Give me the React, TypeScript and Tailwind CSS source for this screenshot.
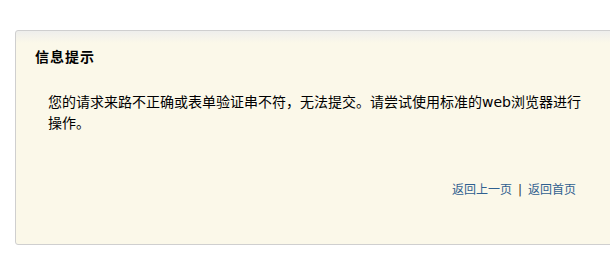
import React from 'react'

export default function App() {
  return (
    <div className="h-[280px] w-[610px] overflow-hidden bg-white pl-[15px] pt-[30px] [font-family:'DejaVu_Sans','Noto_Sans_CJK_SC',sans-serif]">
      <div className="h-[215px] w-[600px] rounded-[3px] border border-[#cfcfcf] bg-[linear-gradient(to_bottom,#eeeeec_0px,#fbf8e9_12px)]">
        <h1 className="pl-[19px] pt-[16px] text-[14px] font-bold leading-[20px] tracking-[1px] text-black">信息提示</h1>
        <p className="ml-[32px] mt-[25px] w-[540px] text-[14px] leading-[21px] text-black">
          您的请求来路不正确或表单验证串不符，无法提交。请尝试使用标准的web浏览器进行操作。
        </p>
        <div className="mt-[47px] flex justify-end pr-[38px] text-[12px] leading-[18px]">
          <a href="#" className="text-[#2f6090]">返回上一页</a>
          <span className="mx-[6px] text-[#333]">|</span>
          <a href="#" className="text-[#2f6090]">返回首页</a>
        </div>
      </div>
    </div>
  )
}
